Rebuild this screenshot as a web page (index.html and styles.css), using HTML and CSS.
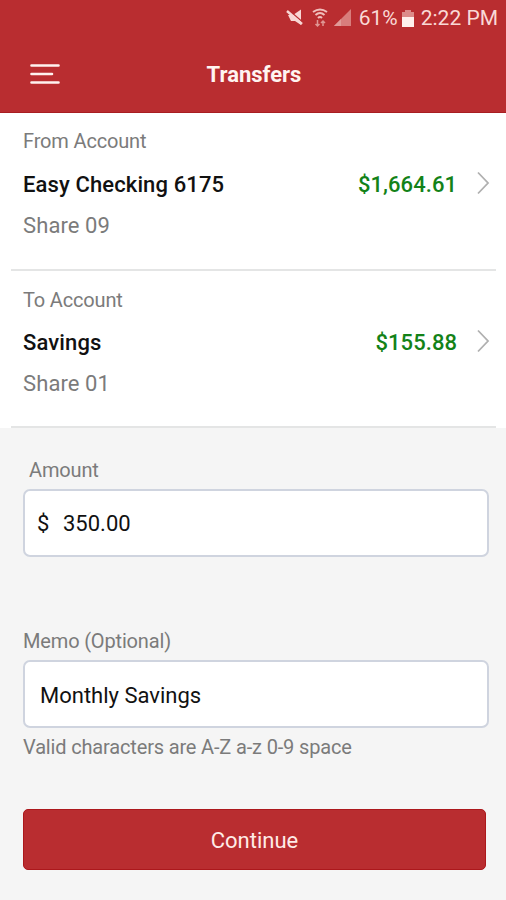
FILE: index.html
```html
<!DOCTYPE html>
<html lang="en">
<head>
<meta charset="utf-8">
<title>Transfers</title>
<link rel="stylesheet" href="styles.css">
</head>
<body>
<header class="header">
  <div class="status">
    <svg class="status-icons" width="68" height="22" viewBox="0 0 68 22" fill="none">
      <path d="M2 8h5l8-5.500v15.500l-6-4H5z" fill="#f8d7d4"/>
      <path d="M2 2.500l15 13" stroke="#b92d30" stroke-width="1.600"/>
      <path d="M1 4l15 13" stroke="#f8d7d4" stroke-width="2.400"/>
      <path d="M27 5q7-5 14 0M29.500 8q4.500-4 9 0M32 11q2-2 4 0" stroke="#f0bfbc" stroke-width="2"/>
      <path d="M31.500 13v6m-2-2l2 2 2-2M37 19v-5m-2 2l2-2 2 2" stroke="#df9693" stroke-width="1.5"/>
      <path d="M48 19L65 2v17z" fill="#d87d7c"/>
      <path d="M48 19l7-7v7z" fill="#e09a97"/>
    </svg>
    <span class="battery-level">61%</span>
    <svg class="battery" width="12" height="17" viewBox="0 0 12 17">
      <path d="M0 2h3V0h6v2h3v6H0z" fill="#dc8b89"/>
      <path d="M0 7h12v10H0z" fill="#fff0ec"/>
    </svg>
    <span class="clock">2:22 PM</span>
  </div>
  <div class="appbar">
    <svg class="menu" width="30" height="22" viewBox="0 0 30 22" stroke="#fff2ef" stroke-width="2.600" stroke-linecap="round">
      <path d="M1.500 2.500h27M1.500 11h20.500M1.500 19.500h27"/>
    </svg>
    <h1 class="title">Transfers</h1>
  </div>
</header>
<main>
  <section class="account">
    <div class="label from">From Account</div>
    <div class="row">
      <span class="name">Easy Checking 6175</span>
      <span class="balance">$1,664.61</span>
      <svg class="chevron" width="14" height="24" viewBox="0 0 14 24"><path d="M2 1.500L12 12 2 22.500"/></svg>
    </div>
    <div class="share">Share 09</div>
  </section>
  <section class="account to">
    <div class="label">To Account</div>
    <div class="row">
      <span class="name">Savings</span>
      <span class="balance">$155.88</span>
      <svg class="chevron" width="14" height="24" viewBox="0 0 14 24"><path d="M2 1.500L12 12 2 22.500"/></svg>
    </div>
    <div class="share">Share 01</div>
  </section>
  <section class="form">
    <div class="label amount-label">Amount</div>
    <div class="field"><span class="currency">$</span><span class="amount">350.00</span></div>
    <div class="label memo-label">Memo (Optional)</div>
    <div class="field memo-field"><span class="memo">Monthly Savings</span></div>
    <div class="label hint">Valid characters are A-Z a-z 0-9 space</div>
    <div class="button">Continue</div>
  </section>
</main>
</body>
</html>
```

FILE: styles.css
```css
* { box-sizing: border-box; }
body {
  margin: 0;
  min-height: 900px;
  background: #f5f5f5;
  color: #111;
  font-family: Roboto, sans-serif;
  font-size: 22px;
  line-height: 28px;
}
svg { display: block; flex: none; }
.header { height: 113px; background: #b92d30; border-bottom: 1px solid #a81e22; }
.status {
  display: flex;
  align-items: center;
  justify-content: flex-end;
  height: 36px;
  padding-right: 8px;
  color: #f9d9d6;
  font-size: 21px;
}
.status-icons { margin-right: 5px; }
.battery { margin: 0 7px 0 4px; }
.appbar {
  display: grid;
  grid-template-columns: 60px 1fr 60px;
  align-items: center;
  height: 76px;
}
.menu { margin-left: 30px; }
.title {
  margin: 2px 0 0 2px;
  color: #fff4f1;
  font-size: 22px;
  font-weight: 700;
  text-align: center;
}
.account {
  position: relative;
  height: 158px;
  padding: 17px 16px 0 23px;
  background: #fff;
}
.account::after {
  content: "";
  position: absolute;
  left: 11px;
  right: 10px;
  bottom: 0;
  height: 2px;
  background: #e4e5e5;
}
.account.to { height: 157px; }
.label { color: #7b7b7b; font-size: 20px; line-height: 24px; letter-spacing: -0.16px; }
.from { margin-top: -1px; margin-bottom: 18px; }
.row { display: flex; align-items: center; margin-top: 17px; height: 28px; }
.name { flex: 1; color: #111; font-weight: 500; letter-spacing: 0.12px; }
.balance { margin-right: 19px; color: #138218; font-weight: 500; letter-spacing: 0.05px; }
.chevron { fill: none; stroke: #b0b0b0; stroke-width: 1.8; margin-top: -5px; }
.share { margin-top: 13px; color: #7b7b7b; letter-spacing: 0.1px; }
.form { padding: 30px 17px 0 23px; }
.amount-label { margin-left: 6px; }
.field {
  display: flex;
  align-items: center;
  height: 68px;
  margin-top: 7px;
  padding: 2px 0 0 12px;
  background: #fff;
  border: 2px solid #cfd4df;
  border-radius: 7px;
}
.memo-field { padding-top: 4px; }
.currency { width: 26px; }
.memo { margin-left: 3px; }
.memo-label { margin-top: 72px; }
.hint { margin-top: 7px; }
.button {
  display: flex;
  align-items: center;
  justify-content: center;
  height: 61px;
  margin: 50px 3px 0 0;
  padding-top: 3px;
  border: 1px solid #ac181c;
  border-radius: 5px;
  background: #b92d30;
  color: #ffebe7;
}
```
